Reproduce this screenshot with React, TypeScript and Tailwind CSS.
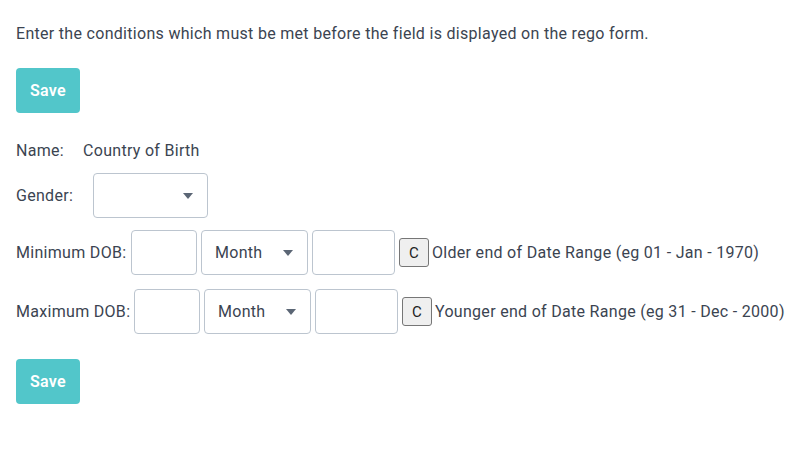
import React from 'react';

const font = { fontFamily: 'Roboto, "Liberation Sans", sans-serif' };

function Caret() {
  return (
    <svg width="10" height="6" viewBox="0 0 10 6" className="shrink-0">
      <path d="M0 0 L10 0 L5 6 Z" fill="#5b6675" />
    </svg>
  );
}

function SelectBox({ value, className }: { value?: string; className: string }) {
  return (
    <div
      className={`flex h-[45px] items-center justify-between rounded-[4px] border border-[#bcc5cf] bg-white pl-[13px] pr-[14px] text-[16px] text-[#3b4451] ${className}`}
    >
      <span>{value ?? ''}</span>
      <Caret />
    </div>
  );
}

function TextBox({ className }: { className: string }) {
  return (
    <input
      type="text"
      className={`h-[45px] rounded-[4px] border border-[#bcc5cf] bg-white outline-none ${className}`}
    />
  );
}

function DobRow({ label, hint, labelWidth }: { label: string; hint: string; labelWidth: string }) {
  return (
    <div className="flex items-center">
      <span className={`${labelWidth} shrink-0`}>{label}</span>
      <TextBox className="w-[66px]" />
      <SelectBox value="Month" className="ml-[4px] w-[107px]" />
      <TextBox className="ml-[4px] w-[83px]" />
      <button className="ml-[4px] flex h-[29px] w-[30px] items-center justify-center rounded-[3px] border border-[#767676] bg-[#efefef] text-[15px] text-[#222]">
        C
      </button>
      <span className="ml-[3px] whitespace-nowrap">{hint}</span>
    </div>
  );
}

function SaveButton({ className }: { className: string }) {
  return (
    <button
      className={`flex h-[45px] w-[64px] items-center justify-center rounded-[4px] bg-[#52c6ca] text-[16px] font-semibold text-white ${className}`}
    >
      Save
    </button>
  );
}

export default function App() {
  return (
    <div
      className="min-h-[449px] w-[810px] bg-white pl-[16px] text-[16px] leading-[22px] tracking-[0.3px] text-[#3b4451]"
      style={font}
    >
      <p className="pt-[23px]">Enter the conditions which must be met before the field is displayed on the rego form.</p>
      <SaveButton className="mt-[23px]" />

      <div className="mt-[27px] flex">
        <span className="w-[67px]">Name:</span>
        <span>Country of Birth</span>
      </div>

      <div className="mt-[11px] flex items-center">
        <span className="w-[77px]">Gender:</span>
        <SelectBox className="w-[115px]" />
      </div>

      <div className="mt-[12px]">
        <DobRow label="Minimum DOB:" hint="Older end of Date Range (eg 01 - Jan - 1970)" labelWidth="w-[115px]" />
      </div>
      <div className="mt-[14px]">
        <DobRow label="Maximum DOB:" hint="Younger end of Date Range (eg 31 - Dec - 2000)" labelWidth="w-[118px]" />
      </div>

      <SaveButton className="mt-[25px]" />
    </div>
  );
}
